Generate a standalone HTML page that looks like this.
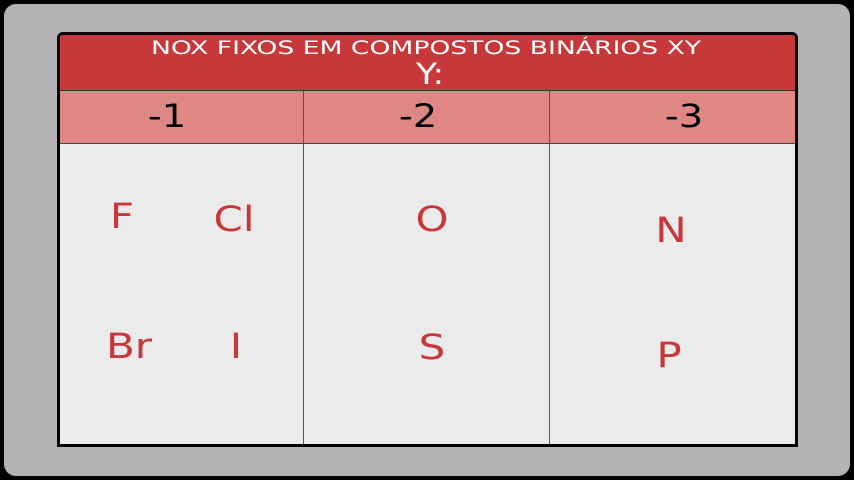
<html><head><style>
body{margin:0;width:854px;height:480px;background:#000;position:relative;overflow:hidden;font-family:"DejaVu Sans","Liberation Sans",sans-serif}
.g{position:absolute;left:4px;top:4px;width:846px;height:472px;background:#b3b3b3;border-radius:12px}
.t{position:absolute;left:57px;top:32px;width:735px;height:409px;border:3px solid #000;border-radius:6px 6px 0 0;background:#ebebeb;overflow:hidden}
.h{position:absolute;left:0;top:0;width:100%;height:55px;background:#c8373a;border-bottom:1px solid #333}
.s{position:absolute;left:0;top:56px;width:100%;height:52px;background:#de8785;border-bottom:1px solid #444}
.v{position:absolute;top:56px;bottom:0;width:1px;background:#555}
.x{position:absolute;transform:translate(-50%,-50%) scaleX(1.2);white-space:nowrap}
.w{color:#fff}.n{color:#000;font-size:32px}.r{color:#c8373a;font-size:35px}
</style></head><body>
<div class="g"></div>
<div class="t">
<div class="h"></div><div class="s"></div>
<div class="v" style="left:243px"></div><div class="v" style="left:489px"></div>
</div>
<div class="x w" style="left:426px;top:48px;font-size:19px;transform:translate(-50%,-50%) scaleX(1.4)">NOX FIXOS EM COMPOSTOS BINÁRIOS XY</div>
<div class="x w" style="left:430px;top:74px;font-size:29px">Y:</div>
<div class="x n" style="left:167px;top:116px">-1</div>
<div class="x n" style="left:418px;top:116px">-2</div>
<div class="x n" style="left:684px;top:116px">-3</div>
<div class="x r" style="left:122px;top:217px">F</div>
<div class="x r" style="left:234px;top:220px">Cl</div>
<div class="x r" style="left:432px;top:220px">O</div>
<div class="x r" style="left:671px;top:231px">N</div>
<div class="x r" style="left:129px;top:347px">Br</div>
<div class="x r" style="left:236px;top:347px">I</div>
<div class="x r" style="left:432px;top:348px">S</div>
<div class="x r" style="left:669px;top:356px">P</div>
</body></html>
